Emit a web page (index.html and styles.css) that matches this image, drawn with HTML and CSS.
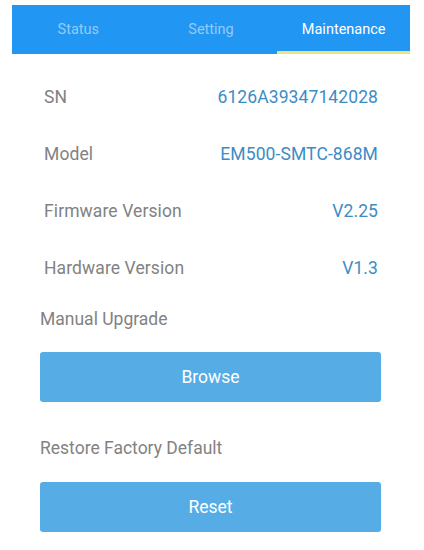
FILE: index.html
```html
<!DOCTYPE html>
<html>
<head>
<meta charset="utf-8">
<link rel="stylesheet" href="styles.css">
</head>
<body>
<div class="tabs">
  <div class="tab">Status</div>
  <div class="tab">Setting</div>
  <div class="tab active">Maintenance</div>
</div>
<div class="info">
  <div class="row"><span class="label">SN</span><span class="value">6126A39347142028</span></div>
  <div class="row"><span class="label">Model</span><span class="value">EM500-SMTC-868M</span></div>
  <div class="row"><span class="label">Firmware Version</span><span class="value">V2.25</span></div>
  <div class="row"><span class="label">Hardware Version</span><span class="value">V1.3</span></div>
</div>
<div class="section">
  <div class="section-title">Manual Upgrade</div>
  <div class="btn">Browse</div>
  <div class="section-title second">Restore Factory Default</div>
  <div class="btn">Reset</div>
</div>
</body>
</html>
```
FILE: styles.css
```css
body {
  margin: 0;
  background: #ffffff;
  font-family: Roboto, "Noto Sans", sans-serif;
}
.tabs {
  display: flex;
  margin: 5px 14px 0 12px;
  height: 49px;
  background: #2196f3;
}
.tab {
  flex: 1;
  display: flex;
  align-items: center;
  justify-content: center;
  font-size: 14.5px;
  color: #93cbf8;
  padding-top: 3px;
  border-bottom: 3px solid transparent;
  box-sizing: border-box;
}
.tab.active {
  color: #ffffff;
  border-bottom-color: #ece47a;
}
.info {
  margin-top: 14px;
  padding: 0 46px 0 44px;
}
.row {
  height: 57px;
  display: flex;
  align-items: center;
  justify-content: space-between;
  font-size: 17.5px;
  letter-spacing: 0.1px;
}
.label {
  color: #828282;
}
.value {
  color: #3d8cc4;
}
.section {
  padding: 0 43px 0 40px;
}
.section-title {
  margin-top: 11px;
  line-height: 24px;
  font-size: 17.5px;
  color: #828282;
}
.section-title.second {
  margin-top: 34px;
}
.section-title.second + .btn {
  margin-top: 22px;
}
.btn {
  margin-top: 21px;
  height: 50px;
  border-radius: 3px;
  background: #56ade6;
  color: #ffffff;
  font-size: 17.5px;
  display: flex;
  align-items: center;
  justify-content: center;
}
```
